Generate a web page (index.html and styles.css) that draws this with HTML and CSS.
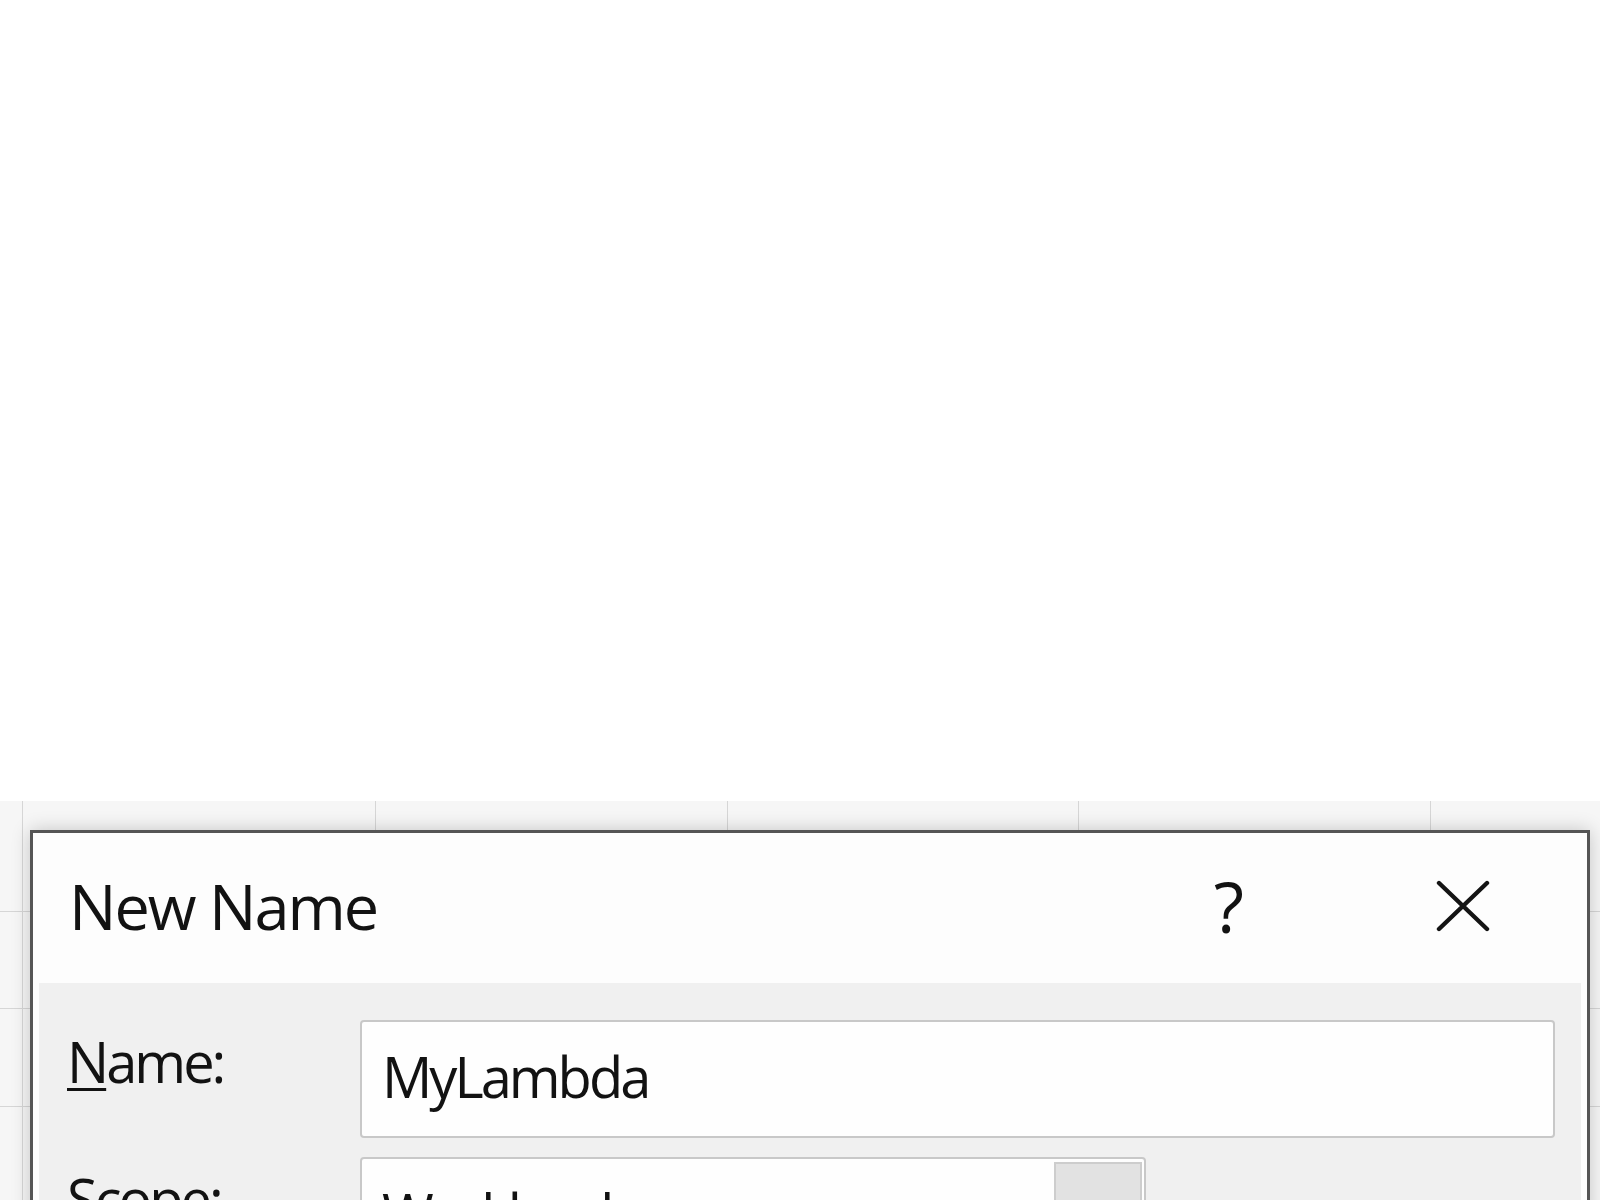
FILE: index.html
```html
<!DOCTYPE html>
<html lang="en">
<head>
<meta charset="utf-8">
<title>New Name</title>
<link rel="stylesheet" href="styles.css">
</head>
<body>
<div class="screen">
  <div class="blank"></div>
  <div class="sheet">
    <div class="cell"></div><div class="cell"></div><div class="cell"></div><div class="cell"></div><div class="cell"></div><div class="cell"></div>
    <div class="cell"></div><div class="cell"></div><div class="cell"></div><div class="cell"></div><div class="cell"></div><div class="cell"></div>
    <div class="cell"></div><div class="cell"></div><div class="cell"></div><div class="cell"></div><div class="cell"></div><div class="cell"></div>
    <div class="cell"></div><div class="cell"></div><div class="cell"></div><div class="cell"></div><div class="cell"></div><div class="cell"></div>
  </div>

  <div class="dialog">
    <div class="titlebar">
      <span class="title">New Name</span>
      <div class="controls">
        <span class="help">?</span>
        <svg class="close" width="54" height="52" viewBox="0 0 54 52" aria-hidden="true">
          <path d="M3 3 L51 49 M51 3 L3 49" stroke="#141414" stroke-width="4.4" fill="none" stroke-linecap="round"/>
        </svg>
      </div>
    </div>
    <div class="body">
      <div class="row">
        <label class="label"><span class="ul">N</span>ame:</label>
        <div class="field">MyLambda</div>
      </div>
      <div class="row">
        <label class="label">Scope:</label>
        <div class="select">
          <span class="select-text">Workbook</span>
          <div class="drop"></div>
        </div>
      </div>
    </div>
  </div>
</div>
</body>
</html>
```

FILE: styles.css
```css
html, body {
  margin: 0;
  padding: 0;
  background: #ffffff;
}

.screen {
  position: relative;
  width: 1600px;
  height: 1200px;
  overflow: hidden;
  font-family: "Open Sans", "Noto Sans", sans-serif;
  font-weight: 400;
  color: #121212;
}

.blank {
  height: 801px;
  background: #ffffff;
}

.sheet {
  display: grid;
  grid-template-columns: 22px 352px 351px 350px 351px 1fr;
  grid-template-rows: 110px 96px 97px 1fr;
  gap: 1px;
  height: 399px;
  background: #d6d6d6;
}

.cell {
  background: #f6f6f6;
}

.dialog {
  position: absolute;
  left: 30px;
  top: 830px;
  width: 1560px;
  height: 420px;
  box-sizing: border-box;
  border: 3px solid #555555;
  background: #fdfdfd;
  box-shadow: 0 0 18px rgba(0, 0, 0, 0.2);
  display: flex;
  flex-direction: column;
}

.titlebar {
  height: 146px;
  flex: none;
  display: flex;
  align-items: center;
  justify-content: space-between;
  padding: 0 97px 4px 36px;
}

.title {
  font-size: 63px;
  line-height: 1.2;
  letter-spacing: -2px;
}

.controls {
  display: flex;
  align-items: center;
  gap: 192px;
}

.help {
  font-size: 70px;
  line-height: 1;
}

.close {
  display: block;
}

.body {
  flex: 1;
  margin: 0 6px;
  background: #f0f0f0;
  padding: 37px 26px 0 28px;
  display: flex;
  flex-direction: column;
  gap: 19px;
}

.row {
  display: flex;
  align-items: flex-start;
}

.label {
  width: 293px;
  flex: none;
  font-size: 56px;
  line-height: 70px;
  letter-spacing: -3px;
  padding-top: 6px;
}

.ul {
  text-decoration: underline;
  text-decoration-thickness: 3px;
  text-underline-offset: 5px;
}

.field {
  flex: 1;
  height: 118px;
  box-sizing: border-box;
  border: 2px solid #c8c8c8;
  border-radius: 4px;
  background: #fefefe;
  padding: 19px 0 0 20px;
  font-size: 56px;
  line-height: 70px;
  letter-spacing: -3px;
}

.select {
  width: 786px;
  height: 118px;
  box-sizing: border-box;
  border: 2px solid #c8c8c8;
  border-radius: 4px;
  background: #fefefe;
  display: flex;
  align-items: flex-start;
  font-size: 56px;
  line-height: 70px;
  letter-spacing: -3px;
}

.select-text {
  flex: 1;
  padding: 19px 0 0 20px;
  color: #121212;
}

.drop {
  width: 88px;
  height: 110px;
  margin: 3px 2px 0 0;
  box-sizing: border-box;
  border: 2px solid #cdcdcd;
  background: #e2e2e2;
}
```
